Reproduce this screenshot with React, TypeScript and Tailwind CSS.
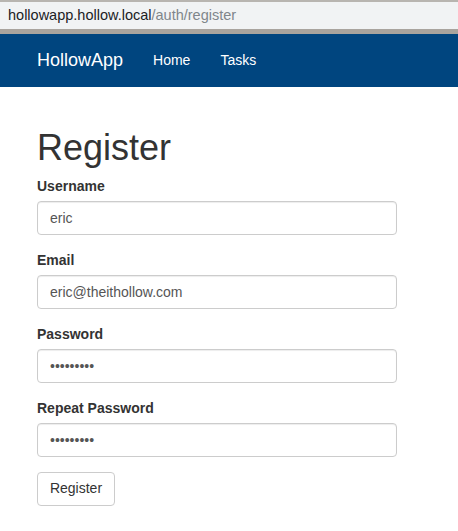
import { useState } from 'react';

export default function App() {
  const [username, setUsername] = useState('eric');
  const [email, setEmail] = useState('eric@theithollow.com');
  const [password, setPassword] = useState('password1');
  const [repeat, setRepeat] = useState('password1');

  const fields = [
    { label: 'Username', type: 'text', value: username, set: setUsername },
    { label: 'Email', type: 'email', value: email, set: setEmail },
    { label: 'Password', type: 'password', value: password, set: setPassword },
    { label: 'Repeat Password', type: 'password', value: repeat, set: setRepeat },
  ];

  return (
    <div className="min-h-screen bg-white font-['Liberation_Sans',Arial,sans-serif] text-[#333]">
      {/* browser address bar */}
      <div className="border-t-2 border-[#b8b5b0] bg-[#f1f3f4] h-[29px] flex items-center px-2 text-[14.5px]">
        <span className="text-[#202124]">hollowapp.hollow.local</span>
        <span className="text-[#80868b]">/auth/register</span>
      </div>
      <div className="h-[5px] bg-[#a9a49e]" />

      {/* navbar */}
      <nav className="h-[53px] bg-[#00457f] flex items-center pl-[22px]">
        <a className="px-[15px] text-[18px] text-white">HollowApp</a>
        <a className="px-[15px] text-[14px] text-white">Home</a>
        <a className="px-[15px] text-[14px] text-white">Tasks</a>
      </nav>

      <div className="pl-[37px] pt-[41px]">
        <h1 className="text-[36px] leading-[39.6px] mb-[8px]">Register</h1>
        {fields.map((f) => (
          <div key={f.label} className="mb-[15px]">
            <label className="block text-[14px] leading-[20px] font-bold mb-[5px]">{f.label}</label>
            <input
              type={f.type}
              value={f.value}
              onChange={(e) => f.set(e.target.value)}
              className="block w-[360px] h-[34px] px-3 text-[14px] text-[#555] border border-[#ccc] rounded-[4px] shadow-[inset_0_1px_1px_rgba(0,0,0,0.075)] outline-none"
            />
          </div>
        ))}
        <button className="h-[34px] w-[78px] text-[14px] text-[#333] border border-[#ccc] rounded-[4px] bg-white">
          Register
        </button>
      </div>
    </div>
  );
}
